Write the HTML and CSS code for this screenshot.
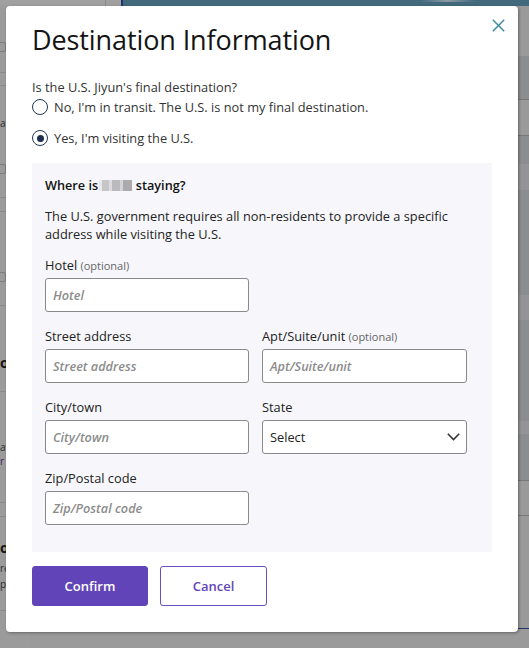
FILE: index.html
```html
<!DOCTYPE html>
<html lang="en">
<head>
<meta charset="utf-8">
<title>Destination Information</title>
<link rel="stylesheet" href="styles.css">
</head>
<body>
<div class="page">
  <div class="page-top">
    <div class="top-a"></div>
    <div class="top-b"></div>
    <div class="top-c"><div class="streak"></div></div>
  </div>
  <div class="page-body">
    <div class="side">
      <div class="srow s1"><div class="box b1"></div></div>
      <div class="srow s2"></div>
      <div class="srow s3"><div class="frag f-a">a</div><div class="box b2"></div></div>
      <div class="srow s4"></div>
      <div class="srow s5"><div class="box b3"></div></div>
      <div class="srow s6"><div class="frag bold f-ol">ol</div></div>
      <div class="srow s7"><div class="frag f-av">av</div><div class="frag purple f-r">r</div></div>
      <div class="srow s8"></div>
      <div class="srow s9"><div class="frag bold f-ou">ou</div><div class="frag f-re">re</div><div class="frag f-p">p</div></div>
    </div>
    <div class="middle"></div>
    <div class="right">
      <div class="rb light h50"></div>
      <div class="rb dark h44 line"></div>
      <div class="rb light h36 line"></div>
      <div class="rb dark h28"></div>
      <div class="rb mid h26"></div>
      <div class="rb dark h105"></div>
      <div class="rb mid h25"></div>
      <div class="rb dark h101"></div>
      <div class="rb mid h13"></div>
      <div class="rb dark h47 line"></div>
      <div class="rb light h35 line"></div>
      <div class="rb light h113 navy"></div>
    </div>
  </div>
</div>

<div class="overlay">
  <div class="modal" role="dialog" aria-labelledby="dlg-title">
    <button class="close" aria-label="Close">
      <svg width="13" height="13" viewBox="0 0 13 13"><path d="M0.8 0.8 L12.2 12.2 M12.2 0.8 L0.8 12.2" stroke="#3f8aa6" stroke-width="1.5" fill="none"/></svg>
    </button>
    <h1 id="dlg-title" class="title">Destination Information</h1>
    <p class="question">Is the U.S. Jiyun's final destination?</p>
    <label class="radio-row"><span class="radio"></span>No, I'm in transit. The U.S. is not my final destination.</label>
    <label class="radio-row second"><span class="radio checked"></span>Yes, I'm visiting the U.S.</label>

    <section class="panel">
      <h2 class="panel-title">Where is <span class="blur"></span> staying?</h2>
      <p class="panel-text">The U.S. government requires all non-residents to provide a specific address while visiting the U.S.</p>
      <div class="grid">
        <div class="field">
          <div class="label">Hotel <span class="opt">(optional)</span></div>
          <div class="input"><span class="ph">Hotel</span></div>
        </div>
        <div class="field"></div>
        <div class="field">
          <div class="label">Street address</div>
          <div class="input"><span class="ph">Street address</span></div>
        </div>
        <div class="field">
          <div class="label">Apt/Suite/unit <span class="opt">(optional)</span></div>
          <div class="input"><span class="ph">Apt/Suite/unit</span></div>
        </div>
        <div class="field">
          <div class="label">City/town</div>
          <div class="input"><span class="ph">City/town</span></div>
        </div>
        <div class="field">
          <div class="label">State</div>
          <div class="input select"><span class="sel">Select</span>
            <svg class="chev" width="13" height="8" viewBox="0 0 13 8"><path d="M0.8 0.8 L6.5 6.6 L12.2 0.8" stroke="#333" stroke-width="1.5" fill="none"/></svg>
          </div>
        </div>
        <div class="field">
          <div class="label">Zip/Postal code</div>
          <div class="input"><span class="ph">Zip/Postal code</span></div>
        </div>
      </div>
    </section>

    <div class="actions">
      <button class="btn primary">Confirm</button>
      <button class="btn secondary">Cancel</button>
    </div>
  </div>
</div>
</body>
</html>
```

FILE: styles.css
```css
* { box-sizing: border-box; }
html, body { margin: 0; padding: 0; }
body {
  width: 529px;
  height: 648px;
  overflow: hidden;
  background: #9a9a9a;
  font-family: "Open Sans", "Noto Sans", sans-serif;
  color: #222;
  position: relative;
}

/* dimmed page behind the dialog */
.page { width: 529px; height: 648px; display: flex; flex-direction: column; }
.page-top { display: flex; height: 6px; flex: none; }
.top-a { width: 106px; background: #a0a0a0; border-right: 1px solid #8a8a8a; }
.top-b { width: 17px; background: #a0a0a0; border-right: 2px solid #1e3470; }
.top-c { flex: 1; background: #42697c; position: relative; }
.streak { position: absolute; left: 297px; top: 0; width: 55px; height: 2px; background: linear-gradient(90deg, #42697c, #8a9aa3, #42697c); }

.page-body { display: flex; flex: 1; }
.side { width: 30px; background: #9b9b9b; flex: none; }
.srow { border-bottom: 1px solid #8a8a8a; }
.s1 { height: 67px; padding-top: 36px; }
.s2 { height: 13px; }
.s3 { height: 112px; padding-top: 30px; }
.s4 { height: 14px; }
.s5 { height: 94px; padding-top: 60px; }
.s6 { height: 86px; padding-top: 47px; }
.s7 { height: 111px; padding-top: 48px; }
.s8 { height: 14px; }
.s9 { height: 94px; padding-top: 21px; }
.box { width: 11px; height: 10px; border: 1px solid #7c7c7c; border-radius: 2px; margin-left: -5px; }
.b2 { margin-top: 34px; }
.frag { font-size: 10px; line-height: 14px; color: #2c2c2c; white-space: nowrap; }
.frag.bold { font-weight: 700; font-size: 14px; line-height: 20px; color: #151515; }
.frag.purple { color: #3f2460; }
.f-re { margin-top: 3px; }
.f-p { margin-top: 2px; }
.middle { flex: 1; }
.right { width: 11px; flex: none; display: flex; flex-direction: column; }
.rb { flex: none; }
.rb.light { background: #9a9a9a; }
.rb.dark { background: #8c8d8f; }
.rb.mid { background: #949496; }
.rb.line { border-bottom: 1px solid #777; }
.rb.navy { border-bottom: 1px solid #22386a; }
.h50 { height: 50px; } .h44 { height: 44px; } .h36 { height: 36px; } .h28 { height: 28px; }
.h26 { height: 26px; } .h105 { height: 105px; } .h25 { height: 25px; } .h101 { height: 101px; }
.h13 { height: 13px; } .h47 { height: 47px; } .h35 { height: 35px; } .h113 { height: 113px; }

.overlay { position: absolute; inset: 0; }

.modal {
  position: absolute;
  left: 6px;
  top: 6px;
  width: 512px;
  height: 626px;
  background: #fff;
  border-radius: 4px;
  box-shadow: 1px 1px 3px rgba(0,0,0,0.35);
  padding: 18px 26px 26px;
}

.close {
  position: absolute;
  right: 11px;
  top: 10px;
  width: 18px;
  height: 18px;
  border: 0;
  background: transparent;
  padding: 0;
  cursor: pointer;
  display: flex;
  align-items: center;
  justify-content: center;
}

.title {
  margin: 0;
  font-size: 27px;
  font-weight: 400;
  line-height: 32px;
  color: #141414;
  letter-spacing: -0.1px;
}

.question {
  margin: 21px 0 0;
  font-size: 12.8px;
  line-height: 20px;
  color: #333;
}

.radio-row {
  display: flex;
  align-items: center;
  gap: 6px;
  height: 20px;
  font-size: 12.8px;
  color: #333;
}
.radio-row.second { margin-top: 11px; }

.radio {
  width: 16px;
  height: 16px;
  border: 1.5px solid #203654;
  border-radius: 50%;
  display: inline-flex;
  align-items: center;
  justify-content: center;
  flex: none;
}
.radio.checked::after {
  content: "";
  width: 7px;
  height: 7px;
  border-radius: 50%;
  background: #1c2f4f;
}

.panel {
  margin-top: 15px;
  background: #f7f7fb;
  padding: 13px;
}

.panel-title {
  margin: 0;
  font-size: 12.7px;
  font-weight: 600;
  line-height: 18px;
  color: #111;
}
.blur {
  display: inline-block;
  width: 33px;
  height: 11px;
  margin: 0 0 0 -2px;
  vertical-align: -1px;
  background:
    linear-gradient(90deg, #e9e9eb 0 3px, #c6c6c8 3px 10px, #dcdcde 10px 13px, #bababc 13px 21px, #d4d4d6 21px 24px, #ababad 24px 33px);
}

.panel-text {
  margin: 13px 0 0;
  font-size: 12.8px;
  line-height: 18px;
  color: #222;
}

.grid {
  margin-top: 12px;
  display: grid;
  grid-template-columns: 204px 205px;
  column-gap: 13px;
}
.field { margin-bottom: 14px; }

.label {
  height: 20px;
  font-size: 12.8px;
  line-height: 20px;
  color: #222;
  margin-bottom: 3px;
  white-space: nowrap;
}
.opt { font-size: 11px; line-height: 1; color: #666; }

.input {
  height: 34px;
  border: 1px solid #8a8a8a;
  border-radius: 3px;
  background: #fff;
  display: flex;
  align-items: center;
  padding: 0 7px;
}
.ph {
  font-size: 12.7px;
  font-style: italic;
  font-weight: 600;
  color: #8c8c8c;
}
.select { justify-content: space-between; padding-right: 6px; }
.sel { font-size: 12.8px; color: #222; }

.actions {
  margin-top: 14px;
  display: flex;
  gap: 12px;
}
.btn {
  height: 40px;
  border-radius: 3px;
  font-family: inherit;
  font-size: 13px;
  font-weight: 600;
  cursor: pointer;
}
.primary {
  width: 116px;
  background: #6145b8;
  border: 1px solid #6145b8;
  color: #fff;
}
.secondary {
  width: 107px;
  background: #fff;
  border: 1px solid #6a4fc0;
  color: #6145b8;
}
```
